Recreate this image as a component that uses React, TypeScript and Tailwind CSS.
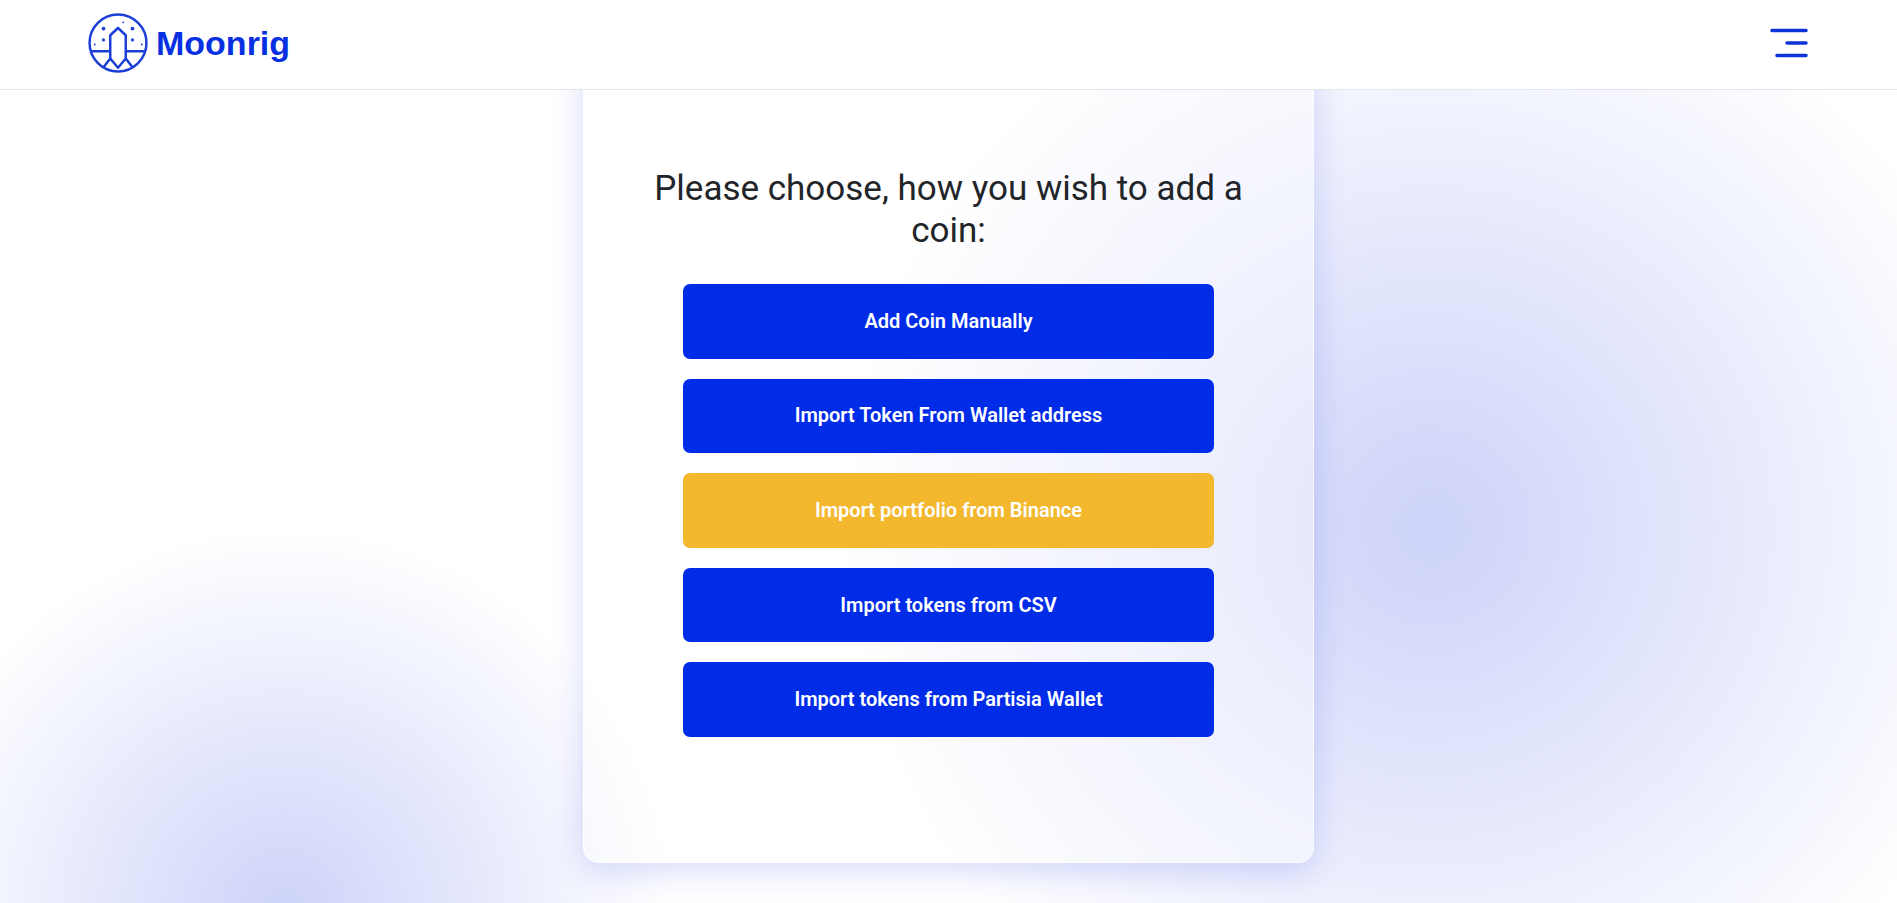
import clsx from "clsx";

type ImportOption = {
  label: string;
  accent?: boolean;
};

const OPTIONS: ImportOption[] = [
  { label: "Add Coin Manually" },
  { label: "Import Token From Wallet address" },
  { label: "Import portfolio from Binance", accent: true },
  { label: "Import tokens from CSV" },
  { label: "Import tokens from Partisia Wallet" },
];

function RocketMark() {
  return (
    <svg viewBox="0 0 58 58" className="size-[60px]" fill="none" stroke="#1b3fd6" strokeWidth="2.4" aria-hidden="true">
      <circle cx="29" cy="29" r="27.5" />
      <path d="M2.5 37H21.5M36.5 37H55.5" />
      <path d="M21.5 45V21.5L29 14.5L36.5 21.5V45" strokeLinejoin="round" />
      <path d="M15 52.5L21.5 44L29 53L36.5 44L43 52.5" strokeLinejoin="round" />
      <g fill="#1b3fd6" stroke="none">
        <circle cx="15" cy="15" r="1.8" />
        <circle cx="43" cy="15" r="1.8" />
        <circle cx="15" cy="26" r="1.5" />
        <circle cx="43" cy="26" r="1.5" />
        <circle cx="34" cy="9" r="0.9" />
        <circle cx="6.5" cy="30.5" r="0.9" />
        <circle cx="52" cy="30.5" r="0.9" />
      </g>
    </svg>
  );
}

function Header() {
  return (
    <header className="relative z-10 flex h-[90px] shrink-0 items-center justify-between border-b border-[#e4e5ea] bg-white px-[88px] pb-1">
      <a
        href="#"
        className="flex items-center gap-2 font-['Liberation_Sans',sans-serif] text-[34px] leading-none font-bold text-[#0630e2]"
      >
        <RocketMark />
        <span>Moonrig</span>
      </a>
      <button type="button" aria-label="Open menu" className="cursor-pointer">
        <svg viewBox="0 0 40 30" className="h-[30px] w-10" stroke="#0c34d6" strokeWidth="3.5" strokeLinecap="round">
          <path d="M3 2.5H37M18 15H37M8 27.5H37" />
        </svg>
      </button>
    </header>
  );
}

function ImportButton({ label, accent }: ImportOption) {
  return (
    <button
      type="button"
      className={clsx(
        "cursor-pointer rounded-[7px] px-4 pb-px text-[20px] font-semibold text-white",
        accent ? "bg-[#f3b82e]" : "bg-[#002ce8]",
      )}
    >
      {label}
    </button>
  );
}

export default function App() {
  return (
    <div className="flex min-h-screen flex-col bg-white font-['Roboto','Liberation_Sans',sans-serif] text-[#212529]">
      <Header />
      <main className="flex flex-1 flex-col items-center overflow-hidden bg-[radial-gradient(circle_590px_at_75.5%_437px,rgba(5,35,225,0.2),rgba(5,35,225,0)),radial-gradient(circle_388px_at_15%_825px,rgba(5,35,225,0.2),rgba(5,35,225,0))] pb-[39px]">
        <section className="-mt-10 w-full max-w-[731px] rounded-2xl border border-white/70 bg-white/40 px-[59px] pt-[117px] pb-[125px] shadow-[0_8px_32px_rgba(5,35,225,0.16)]">
          <h1 className="text-center text-[35px] leading-[42px]">Please choose, how you wish to add a coin:</h1>
          <div className="mx-10 mt-8 grid h-[453px] auto-rows-fr gap-5">
            {OPTIONS.map((option) => (
              <ImportButton key={option.label} {...option} />
            ))}
          </div>
        </section>
      </main>
    </div>
  );
}
